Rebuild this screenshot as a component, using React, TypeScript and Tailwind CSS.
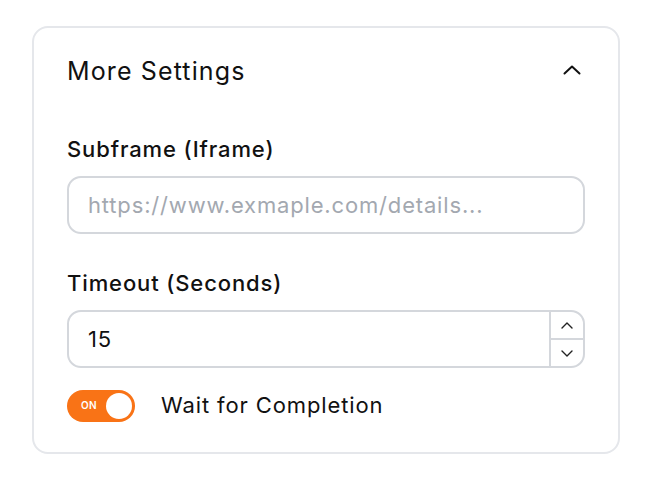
import React from "react";

export default function App() {
  return (
    <div className="w-[652px] h-[488px] bg-white pt-[26px] pl-[32px]" style={{ fontFamily: "Inter, 'Noto Sans', sans-serif" }}>
      <div className="w-[588px] h-[428px] rounded-[16px] border-2 border-[#e5e7eb] px-[33px] pt-[27px] text-[#111111]">
        <div className="flex items-center justify-between h-[32px]">
          <span className="text-[25px] leading-[32px] tracking-[0.045em]">More Settings</span>
          <svg width="18" height="10" viewBox="0 0 18 10" className="mr-[4px] mb-[2px]" fill="none" stroke="#111" strokeWidth="2" strokeLinecap="round" strokeLinejoin="round">
            <path d="M1.5 8.5 L9 1.5 L16.5 8.5" />
          </svg>
        </div>
        <div className="mt-[48px] text-[22px] leading-[28px] font-medium tracking-[0.04em]">Subframe (Iframe)</div>
        <div className="mt-[13px] h-[58px] rounded-[14px] border-2 border-[#d4d7dc] flex items-center pl-[19px] text-[22px] tracking-[0.038em] text-[#a3a8b0]">
          https://www.exmaple.com/details...
        </div>
        <div className="mt-[35px] text-[22px] leading-[28px] font-medium tracking-[0.04em]">Timeout (Seconds)</div>
        <div className="mt-[13px] h-[58px] rounded-[14px] border-2 border-[#d4d7dc] flex items-stretch">
          <div className="flex-1 flex items-center pl-[19px] text-[22px] tracking-[0.04em]">15</div>
          <div className="w-[34px] border-l-2 border-[#d4d7dc] flex flex-col">
            <div className="flex-1 flex items-center justify-center border-b-2 border-[#d4d7dc]">
              <svg width="12" height="7" viewBox="0 0 12 7" fill="none" stroke="#222" strokeWidth="1.4" strokeLinecap="round" strokeLinejoin="round">
                <path d="M1 6 L6 1 L11 6" />
              </svg>
            </div>
            <div className="flex-1 flex items-center justify-center">
              <svg width="12" height="7" viewBox="0 0 12 7" fill="none" stroke="#222" strokeWidth="1.4" strokeLinecap="round" strokeLinejoin="round">
                <path d="M1 1 L6 6 L11 1" />
              </svg>
            </div>
          </div>
        </div>
        <div className="mt-[21px] flex items-center">
          <div className="w-[68px] h-[32px] rounded-full bg-[#f97316] flex items-center justify-between pl-[14px] pr-[3px]">
            <span className="text-[10px] font-semibold text-white tracking-wide">ON</span>
            <span className="w-[26px] h-[26px] rounded-full bg-white"></span>
          </div>
          <span className="ml-[26px] text-[22px] tracking-[0.04em]">Wait for Completion</span>
        </div>
      </div>
    </div>
  );
}
